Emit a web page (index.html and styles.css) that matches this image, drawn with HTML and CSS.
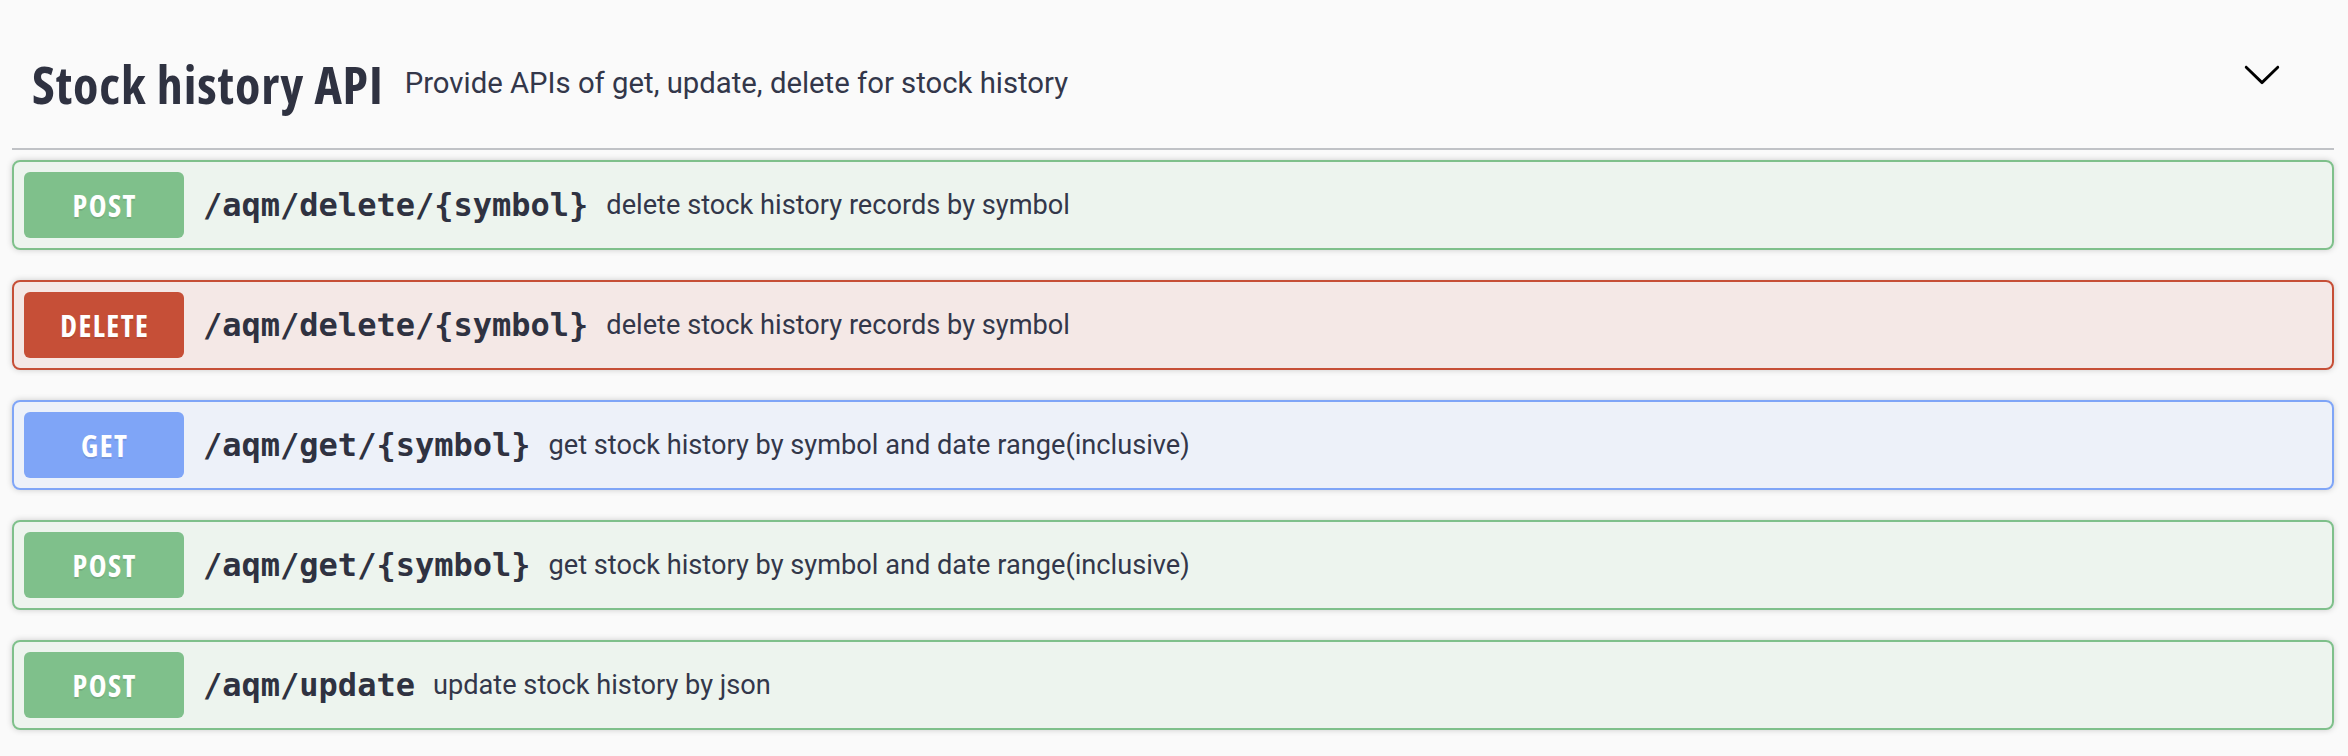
FILE: index.html
```html
<!DOCTYPE html>
<html lang="en">
<head>
<meta charset="utf-8">
<title>Stock history API</title>
<link rel="stylesheet" href="styles.css">
</head>
<body>
<div class="page">
  <section class="tag-section">
    <div class="tag-header">
      <div class="tag-title">
        <h3 class="tag-name">Stock history API</h3>
        <span class="tag-desc">Provide APIs of get, update, delete for stock history</span>
      </div>
      <button class="expand" aria-label="collapse">
        <svg class="chevron" width="40" height="40" viewBox="0 0 20 20"><path d="M17.418 6.109c.272-.268.709-.268.979 0s.271.701 0 .969l-7.908 7.83c-.27.268-.707.268-.979 0l-7.908-7.83c-.27-.268-.27-.701 0-.969.271-.268.709-.268.979 0L10 13.25l7.418-7.141z"/></svg>
      </button>
    </div>
    <div class="ops">
      <div class="opblock op-post">
        <span class="method">POST</span>
        <span class="path">/aqm/delete/{symbol}</span>
        <span class="desc">delete stock history records by symbol</span>
      </div>
      <div class="opblock op-delete">
        <span class="method">DELETE</span>
        <span class="path">/aqm/delete/{symbol}</span>
        <span class="desc">delete stock history records by symbol</span>
      </div>
      <div class="opblock op-get">
        <span class="method">GET</span>
        <span class="path">/aqm/get/{symbol}</span>
        <span class="desc">get stock history by symbol and date range(inclusive)</span>
      </div>
      <div class="opblock op-post">
        <span class="method">POST</span>
        <span class="path">/aqm/get/{symbol}</span>
        <span class="desc">get stock history by symbol and date range(inclusive)</span>
      </div>
      <div class="opblock op-post">
        <span class="method">POST</span>
        <span class="path">/aqm/update</span>
        <span class="desc">update stock history by json</span>
      </div>
    </div>
  </section>
</div>
</body>
</html>
```

FILE: styles.css
```css
html, body {
  margin: 0;
  padding: 0;
  background: #fafafa;
}

body {
  font-family: Roboto, "Liberation Sans", sans-serif;
  color: #3b4151;
}

.page {
  padding: 0 14px 0 12px;
}

.tag-header {
  display: flex;
  align-items: center;
  justify-content: space-between;
  height: 148px;
  border-bottom: 2px solid rgba(59, 65, 81, 0.3);
  padding: 0 52px 0 20px;
}

.tag-title {
  display: flex;
  align-items: center;
  margin-top: 18px;
}

.tag-name {
  margin: 0;
  font-family: "Open Sans", sans-serif;
  font-stretch: 75%;
  font-weight: 700;
  font-size: 52px;
  letter-spacing: 0.9px;
  color: #2f3241;
}

.tag-desc {
  margin-left: 21px;
  font-family: Roboto, sans-serif;
  font-size: 29.3px;
  color: #33374a;
}

.expand {
  display: flex;
  align-items: center;
  background: none;
  border: 0;
  padding: 0;
  margin: 0;
}

.chevron {
  display: block;
  fill: #000;
}

.ops {
  padding-top: 10px;
}

.opblock {
  display: flex;
  align-items: center;
  padding: 10px;
  margin-bottom: 30px;
  border: 2px solid;
  border-radius: 8px;
  box-shadow: 0 0 6px rgba(0, 0, 0, 0.19);
}

.method {
  flex: none;
  box-sizing: border-box;
  width: 160px;
  height: 66px;
  padding-left: 1.5px;
  display: flex;
  align-items: center;
  justify-content: center;
  border-radius: 6px;
  font-family: "Open Sans", sans-serif;
  font-stretch: 75%;
  font-weight: 700;
  font-size: 30px;
  letter-spacing: 1.5px;
  color: #fff;
  text-shadow: 0 2px 0 rgba(0, 0, 0, 0.1);
}

.path {
  margin: 0 18px 0 19px;
  font-family: "DejaVu Sans Mono", monospace;
  font-weight: 700;
  font-size: 32px;
  color: #2f3241;
}

.desc {
  font-family: Roboto, sans-serif;
  font-size: 27.2px;
  color: #33374a;
}

.op-post {
  border-color: #7fc08b;
  background: rgba(127, 192, 139, 0.1);
}
.op-post .method {
  background: #7fc08b;
}

.op-delete {
  border-color: #c64f37;
  background: rgba(198, 79, 55, 0.1);
}
.op-delete .method {
  background: #c64f37;
}

.op-get {
  border-color: #7fa5f7;
  background: rgba(127, 165, 247, 0.1);
}
.op-get .method {
  background: #7fa5f7;
}
```
